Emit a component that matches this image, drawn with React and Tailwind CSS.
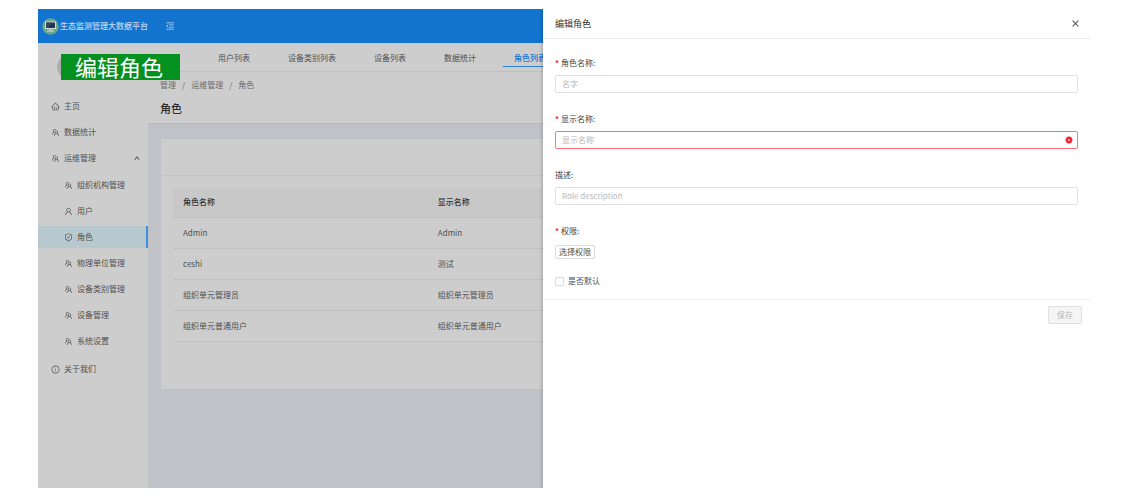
import {
  AiOutlineHome,
  AiOutlineTeam,
  AiOutlineUser,
  AiOutlineSafetyCertificate,
  AiOutlineInfoCircle,
  AiOutlineMenuFold,
  AiOutlineUp,
  AiOutlineClose,
  AiFillCloseCircle,
} from "react-icons/ai";

const subItems = [
  { label: "组织机构管理", icon: AiOutlineTeam },
  { label: "用户", icon: AiOutlineUser },
  { label: "角色", icon: AiOutlineSafetyCertificate, active: true },
  { label: "物理单位管理", icon: AiOutlineTeam },
  { label: "设备类别管理", icon: AiOutlineTeam },
  { label: "设备管理", icon: AiOutlineTeam },
  { label: "系统设置", icon: AiOutlineTeam },
];

const tabs = [
  { label: "用户列表" },
  { label: "设备类别列表" },
  { label: "设备列表" },
  { label: "数据统计" },
  { label: "角色列表", active: true },
];

const rows = [
  ["Admin", "Admin"],
  ["ceshi", "测试"],
  ["组织单元管理员", "组织单元管理员"],
  ["组织单元普通用户", "组织单元普通用户"],
];

function MenuLink({ icon: Icon, label, nested, active, expanded }) {
  return (
    <a
      href="#"
      className={`flex h-[22px] items-center gap-1 pr-2 ${nested ? "pl-[26px]" : "pl-[13px]"} ${
        active ? "border-r-2 border-[#3c8fdb] bg-[#b8c8cf]" : ""
      }`}
    >
      <Icon size={9} className="shrink-0" />
      <span className="flex-1">{label}</span>
      {expanded && <AiOutlineUp size={6} stroke="currentColor" strokeWidth={80} />}
    </a>
  );
}

function Logo() {
  return (
    <svg viewBox="0 0 34 34" className="size-[17px] shrink-0" aria-hidden="true">
      <circle cx="17" cy="17" r="16.5" fill="#6aa88b" />
      <rect x="6" y="7" width="22" height="15" rx="1" fill="#d5dce0" />
      <rect x="8" y="9" width="18" height="11" fill="#23344b" />
      <path d="M8 9h11l-7 11H8z" fill="#35485f" />
      <path d="M14 22h6l1 3h-8z" fill="#aab4b8" />
      <rect x="10" y="25" width="14" height="2" rx="1" fill="#d5dce0" />
    </svg>
  );
}

function Field({ id, label, required, placeholder, error }) {
  return (
    <div className="mb-[18px]">
      <FieldLabel htmlFor={id} required={required}>
        {label}
      </FieldLabel>
      <div className="relative mt-1">
        <input
          id={id}
          type="text"
          placeholder={placeholder}
          aria-invalid={error ? true : undefined}
          className={`block h-[18px] w-full rounded-xs border bg-white px-1.5 pb-0.5 outline-none placeholder:text-[#b8b8b8] ${
            error ? "border-[#ff7078]" : "border-[#e2e2e2]"
          }`}
        />
        {error && <AiFillCloseCircle size={8} className="absolute top-[5px] right-[5px] text-[#f5222d]" />}
      </div>
    </div>
  );
}

function FieldLabel({ htmlFor, required, children }) {
  return (
    <label htmlFor={htmlFor} className="flex h-4 items-center text-[#404040]">
      {required && <span className="w-1.5 font-bold text-[#f5222d]">*</span>}
      {children}:
    </label>
  );
}

export default function App() {
  return (
    <div className="flex min-h-screen flex-col bg-white pt-[9px] pr-[37px] pb-3 pl-[38px] font-['Noto_Sans_CJK_SC',sans-serif] text-[8px] leading-3 text-[#505050]">
      <div className="relative flex flex-1 flex-col overflow-hidden bg-[#c1c2c7]">
        <header className="flex h-[34px] items-center bg-[#1274cf] text-[#c3d8ec]">
          <div className="flex w-[110px] items-center gap-[1px] pl-1 font-medium whitespace-nowrap">
            <Logo />
            <span>生态监测管理大数据平台</span>
          </div>
          <button type="button" aria-label="折叠菜单" className="ml-[17px]">
            <AiOutlineMenuFold size={10} />
          </button>
        </header>

        <div className="flex flex-1">
          <nav className="w-[110px] shrink-0 bg-[#cdcdcd]">
            <div className="h-[52px] pt-3 pl-[19px]">
              <div className="size-6 rounded-full bg-[#adadad]" />
            </div>
            <ul className="flex flex-col gap-1">
              <li>
                <MenuLink icon={AiOutlineHome} label="主页" />
              </li>
              <li>
                <MenuLink icon={AiOutlineTeam} label="数据统计" />
              </li>
              <li>
                <MenuLink icon={AiOutlineTeam} label="运维管理" expanded />
                <ul className="flex flex-col gap-1 pt-[5px] pb-0.5">
                  {subItems.map((item) => (
                    <li key={item.label}>
                      <MenuLink nested {...item} />
                    </li>
                  ))}
                </ul>
              </li>
              <li>
                <MenuLink icon={AiOutlineInfoCircle} label="关于我们" />
              </li>
            </ul>
          </nav>

          <main className="min-w-0 flex-1">
            <div className="flex h-[29px] gap-4 border-b border-[#c0c0c0] bg-[#cdcdcd] pl-[59px]">
              {tabs.map((tab) => (
                <a
                  key={tab.label}
                  href="#"
                  className={`flex h-6 shrink-0 items-center border-b px-[11px] pt-2 pb-[1px] ${
                    tab.active ? "border-[#2b84d6] font-medium text-[#1a78d0]" : "border-transparent"
                  }`}
                >
                  {tab.label}
                </a>
              ))}
            </div>

            <div className="border-b border-[#b8b8ba] bg-[#cdcdcd] px-3 pt-[7px] pb-1.5">
              <div className="flex gap-1.5 text-[#6a6a6a]">
                <span>管理</span>
                <span>/</span>
                <span>运维管理</span>
                <span>/</span>
                <span>角色</span>
              </div>
              <h1 className="mt-2 text-[11px] leading-[18px] font-medium text-[#2b2b2b]">角色</h1>
            </div>

            <section className="mx-[13px] mt-[15px] bg-[#cdcdcd]">
              <div className="h-[37px] border-b border-[#c3c3c3]" />
              <div className="px-3 pt-3 pb-[47px]">
                <table className="w-full table-fixed border-collapse text-left">
                  <thead>
                    <tr className="h-[29px] border-b border-[#c1c1c1] bg-[#c8c8c8] text-[#353535]">
                      <th className="w-2/7 px-2.5 font-medium">角色名称</th>
                      <th className="px-2.5 font-medium">显示名称</th>
                    </tr>
                  </thead>
                  <tbody>
                    {rows.map(([name, display]) => (
                      <tr key={name} className="h-[31px] border-b border-[#c0c0c0]">
                        <td className="px-2.5">{name}</td>
                        <td className="px-2.5">{display}</td>
                      </tr>
                    ))}
                  </tbody>
                </table>
              </div>
            </section>
          </main>
        </div>

        <div className="absolute top-[45px] left-[23px] flex h-[26px] w-[119px] items-center bg-[#04911f] pb-0.5 pl-3.5 text-[22px] leading-6 text-white">
          编辑角色
        </div>

        <aside
          role="dialog"
          aria-labelledby="drawer-title"
          className="absolute inset-y-0 right-0 w-[52%] bg-white shadow-[-1px_0_3px_rgba(0,0,0,0.2)]"
        >
          <div className="flex h-[30px] items-center justify-between border-b border-[#ebebeb] px-3">
            <h2 id="drawer-title" className="text-[9px] text-[#333333]">
              编辑角色
            </h2>
            <button type="button" aria-label="关闭" className="-mr-0.5 text-[#4d4d4d]">
              <AiOutlineClose size={9} stroke="currentColor" strokeWidth={40} />
            </button>
          </div>

          <form>
            <div className="border-b border-[#f0f0f0] px-3 pt-4 pb-3">
              <Field id="name" label="角色名称" placeholder="名字" required />
              <Field id="display" label="显示名称" placeholder="显示名称" required error />
              <Field id="description" label="描述" placeholder="Role description" />
              <FieldLabel htmlFor="permission" required>
                权限
              </FieldLabel>
              <button
                id="permission"
                type="button"
                className="mt-1.5 flex h-3.5 w-10 items-center justify-center rounded-xs border border-[#dcdcdc]"
              >
                选择权限
              </button>
              <label className="mt-4 flex items-center gap-1">
                <input
                  type="checkbox"
                  className="size-[9px] appearance-none rounded-[1px] border border-[#dcdcdc] bg-white checked:bg-[#1890ff]"
                />
                是否默认
              </label>
            </div>
            <div className="flex justify-end px-2 pt-1.5">
              <button
                type="submit"
                disabled
                className="h-[18px] rounded-xs border border-[#e0e0e0] bg-[#f5f5f5] px-2 leading-4 text-[#b8b8b8]"
              >
                保存
              </button>
            </div>
          </form>
        </aside>
      </div>
    </div>
  );
}
